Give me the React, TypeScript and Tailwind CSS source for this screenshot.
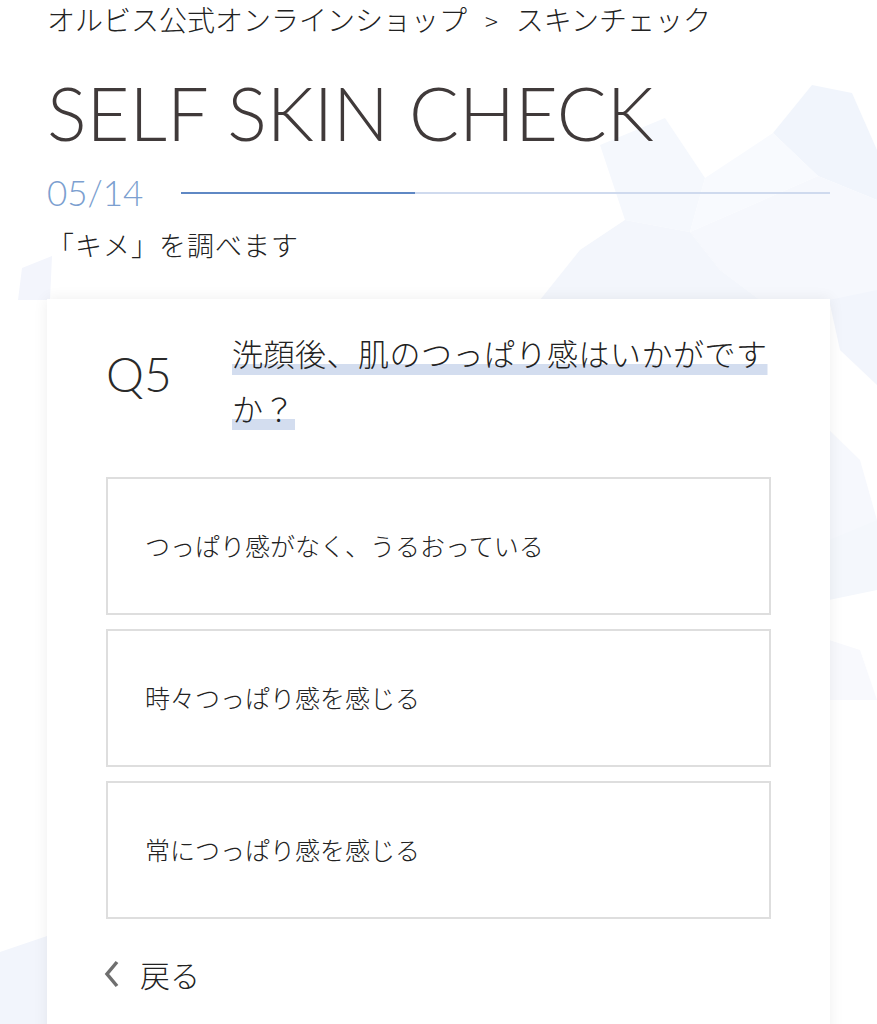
import React from 'react';

const jp = { fontFamily: '"Noto Sans CJK JP", "Noto Sans", sans-serif' };
const latin = { fontFamily: 'Lato, "Noto Sans", sans-serif' };

const options = [
  'つっぱり感がなく、うるおっている',
  '時々つっぱり感を感じる',
  '常につっぱり感を感じる',
];

function Backdrop() {
  // faint crystal shapes behind the page
  return (
    <svg className="absolute top-0 left-0 w-full h-[1024px] pointer-events-none" viewBox="0 0 877 1024" preserveAspectRatio="none">
      <polygon points="600,145 665,118 705,178 690,232 625,220" fill="#f5f8fd" />
      <polygon points="773,133 812,85 852,93 877,150 877,200 818,176" fill="#f1f5fc" />
      <polygon points="690,232 818,176 877,200 877,300 760,300 720,270" fill="#f6f8fd" />
      <polygon points="540,300 580,250 625,220 690,232 720,270 760,300" fill="#f3f6fc" />
      <polygon points="705,178 773,133 818,176 690,232" fill="#f8fafe" />
      <polygon points="829,300 877,290 877,385 840,350" fill="#f2f5fc" />
      <polygon points="829,430 860,460 877,520 829,560" fill="#f6f8fd" />
      <polygon points="829,540 877,520 877,590 829,600" fill="#f4f7fc" />
      <polygon points="829,640 860,650 877,700 829,700" fill="#f8f9fd" />
      <polygon points="22,268 52,256 50,300 18,300" fill="#f3f5fc" />
      <polygon points="0,952 47,936 47,1024 0,1024" fill="#f2f5fc" />
    </svg>
  );
}

export default function App() {
  return (
    <div className="relative min-h-screen overflow-hidden bg-white text-[#222]" style={jp}>
      <Backdrop />
      <div className="relative px-[47px]">
        <nav className="pt-[2px] h-[36px] leading-[34px] text-[28px] font-light whitespace-nowrap">
          オルビス公式オンラインショップ<span className="mx-[18px] text-[24px]">&gt;</span>スキンチェック
        </nav>

        <h1 className="mt-[40px] text-[74px] leading-none font-light text-[#403a3a] whitespace-nowrap" style={latin}>
          SELF SKIN CHECK
        </h1>

        <div className="mt-[25px] flex items-center h-[35px]">
          <div className="w-[134px] shrink-0 text-[35px] leading-none font-light text-[#7c9fd0]" style={latin}>
            05/14
          </div>
          <div className="flex-1 flex h-[2px]">
            <div className="w-[36%] bg-[#5f88c4]" />
            <div className="flex-1 bg-[#cfdaee]" />
          </div>
        </div>

        <p className="mt-[15px] text-[27px] leading-[40px] tracking-[1px] font-light">「キメ」を調べます</p>

        <section className="mt-[34px] bg-white shadow-[0_0_14px_rgba(0,0,0,0.07)] px-[59px] pt-[26px] pb-[60px]">
          <div className="flex">
            <div className="w-[126px] shrink-0 mt-[25px] text-[48px] leading-none font-light text-[#2a2a2a]" style={latin}>
              Q5
            </div>
            <h2 className="flex-1 text-[31px] leading-[55px] font-light tracking-[0.5px]">
              <span className="underline decoration-[#d3ddef] decoration-[11px] underline-offset-[-2px] [text-decoration-skip-ink:none]">
                洗顔後、肌のつっぱり感はいかがですか？
              </span>
            </h2>
          </div>

          <ul className="mt-[42px] flex flex-col gap-[14px]">
            {options.map((o) => (
              <li key={o}>
                <button className="w-full h-[138px] border-2 border-[#dedede] bg-white flex items-center pl-[37px] text-[25px] font-light text-left text-[#222]">
                  {o}
                </button>
              </li>
            ))}
          </ul>

          <button className="mt-[35px] flex items-center h-[40px] text-[30px] font-light text-[#222]">
            <svg width="16" height="28" viewBox="0 0 16 28" className="ml-[-2px] mr-[20px]">
              <polyline points="13,2 3,14 13,26" fill="none" stroke="#6f6f6f" strokeWidth="3.5" strokeLinejoin="miter" />
            </svg>
            戻る
          </button>
        </section>
      </div>
    </div>
  );
}
